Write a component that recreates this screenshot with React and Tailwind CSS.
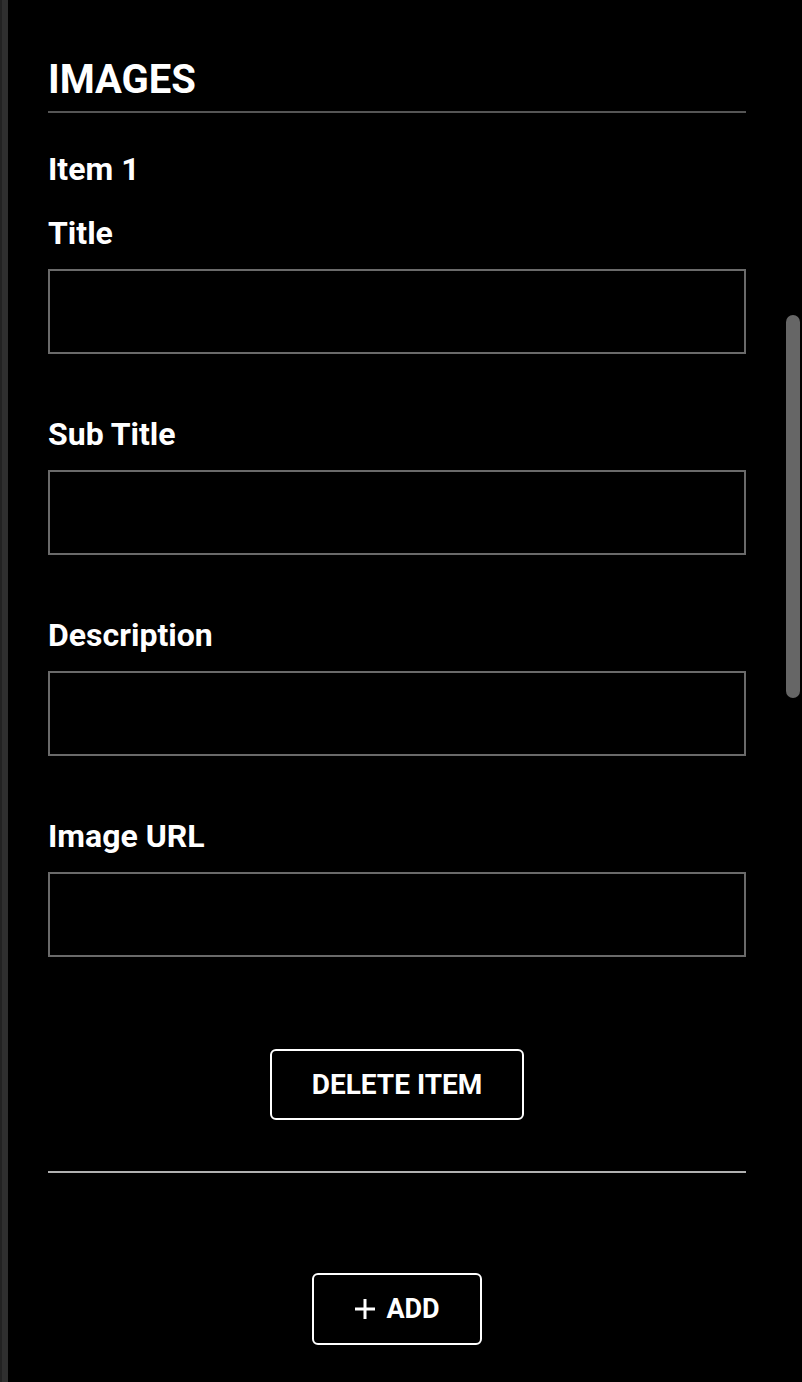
import React from "react";

const fields = ["Title", "Sub Title", "Description", "Image URL"];

const Field = ({ label }) => (
  <div className="flex flex-col">
    <label className="text-[32px] leading-[36px] font-bold text-white">{label}</label>
    <input
      type="text"
      className="mt-[18px] h-[85px] w-full border-2 border-[#6a6a6a] bg-black px-3 text-white outline-none"
    />
  </div>
);

export default function App() {
  return (
    <div
      className="relative flex h-[1382px] w-[802px] overflow-hidden bg-black"
      style={{ fontFamily: "Roboto, 'Liberation Sans', sans-serif" }}
    >
      {/* left edge strip */}
      <div className="flex h-full w-2 shrink-0">
        <div className="h-full w-[2px] bg-[#222]"></div>
        <div className="h-full w-[6px] bg-[#2f2f2f]"></div>
      </div>

      <div className="w-[738px] shrink-0 pl-10 pt-[56px]">
        {/* Header */}
        <div className="border-b-2 border-[#555] pb-[7px]">
          <h2 className="text-[40px] leading-[48px] font-bold text-white">IMAGES</h2>
        </div>

        <h3 className="mt-[38px] text-[32px] leading-[36px] font-bold text-white">Item 1</h3>

        <div className="mt-[28px] flex flex-col gap-[62px]">
          {fields.map((f) => (
            <Field key={f} label={f} />
          ))}
        </div>

        <div className="mt-[92px] flex justify-center">
          <button className="flex h-[71px] items-center rounded-md border-2 border-white pt-[1px] px-[40px] text-[28px] font-bold text-white">
            DELETE ITEM
          </button>
        </div>

        <div className="mt-[51px] h-[2px] w-full bg-[#b0b0b0]"></div>

        <div className="mt-[100px] flex justify-center">
          <button className="flex h-[72px] items-center gap-[10px] rounded-md border-2 border-white px-[40px] text-[27px] font-bold text-white">
            <svg width="22" height="22" viewBox="0 0 22 22" fill="none" stroke="white" strokeWidth="3">
              <path d="M11 1v20M1 11h20" />
            </svg>
            ADD
          </button>
        </div>
      </div>

      {/* scrollbar thumb */}
      <div className="absolute right-[2px] top-[315px] h-[383px] w-[14px] rounded-full bg-[#666]"></div>
    </div>
  );
}
